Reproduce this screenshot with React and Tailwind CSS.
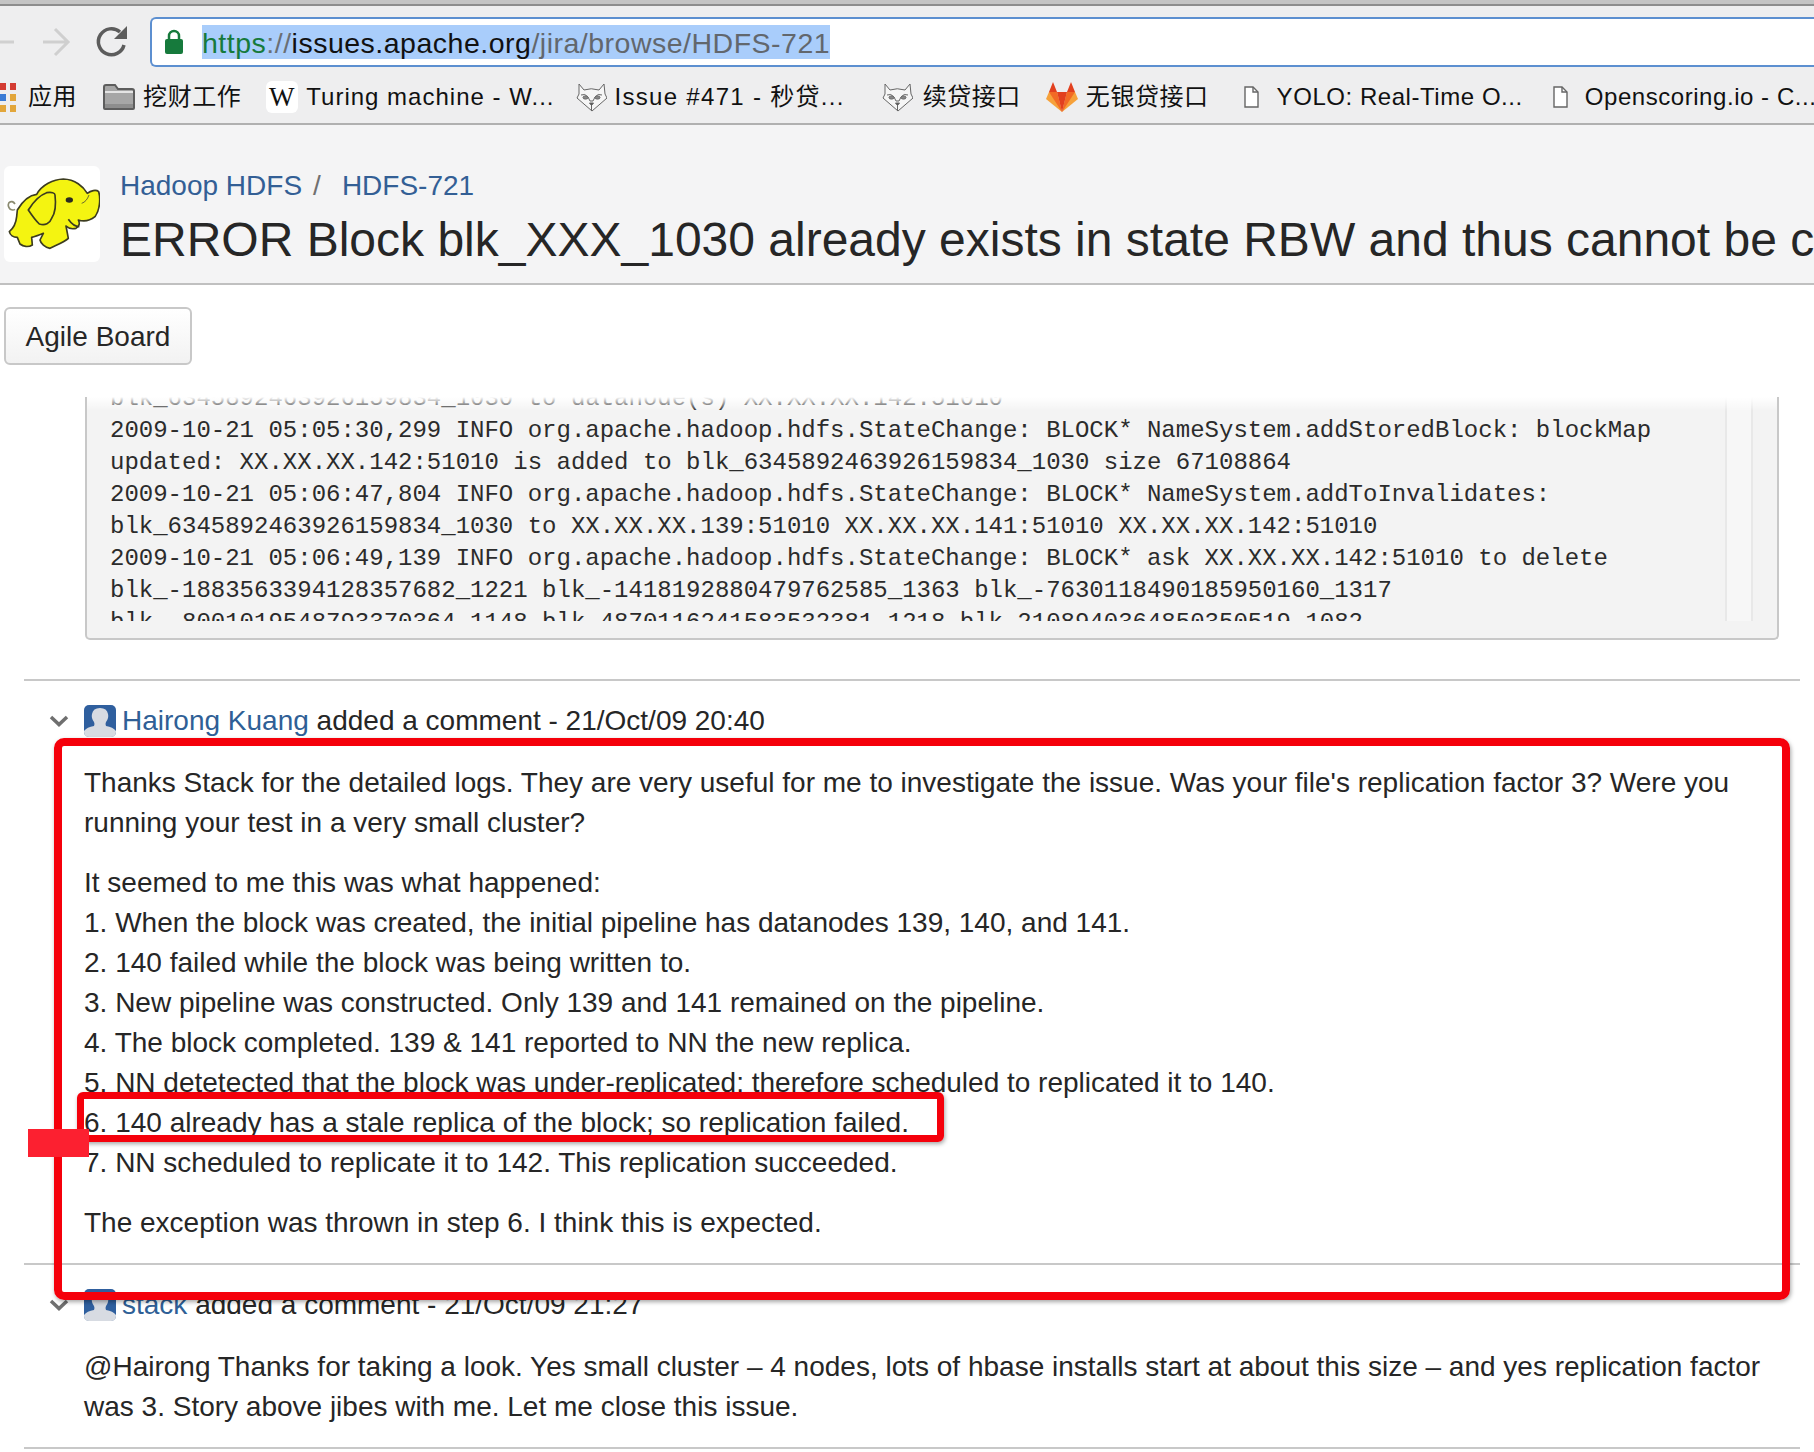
import React from 'react';

const LOG_LINES = [
  'blk_6345892463926159834_1030 to datanode(s) XX.XX.XX.142:51010',
  '2009-10-21 05:05:30,299 INFO org.apache.hadoop.hdfs.StateChange: BLOCK* NameSystem.addStoredBlock: blockMap',
  'updated: XX.XX.XX.142:51010 is added to blk_6345892463926159834_1030 size 67108864',
  '2009-10-21 05:06:47,804 INFO org.apache.hadoop.hdfs.StateChange: BLOCK* NameSystem.addToInvalidates:',
  'blk_6345892463926159834_1030 to XX.XX.XX.139:51010 XX.XX.XX.141:51010 XX.XX.XX.142:51010',
  '2009-10-21 05:06:49,139 INFO org.apache.hadoop.hdfs.StateChange: BLOCK* ask XX.XX.XX.142:51010 to delete',
  'blk_-1883563394128357682_1221 blk_-1418192880479762585_1363 blk_-7630118490185950160_1317',
  'blk_-8001019548793370364_1148 blk_4870116241583532381_1218 blk_2108940364850350519_1082',
];

const STEPS = [
  '1. When the block was created, the initial pipeline has datanodes 139, 140, and 141.',
  '2. 140 failed while the block was being written to.',
  '3. New pipeline was constructed. Only 139 and 141 remained on the pipeline.',
  '4. The block completed. 139 & 141 reported to NN the new replica.',
  '5. NN detetected that the block was under-replicated; therefore scheduled to replicated it to 140.',
  '6. 140 already has a stale replica of the block; so replication failed.',
  '7. NN scheduled to replicate it to 142. This replication succeeded.',
];

const AppsIcon = () => (
  <svg width="17" height="32" viewBox="0 0 17 32" className="shrink-0">
    <rect x="0" y="2" width="6" height="7" fill="#d33b32" />
    <rect x="10" y="2" width="6" height="7" fill="#d33b32" />
    <rect x="0" y="13" width="6" height="7" fill="#3a7bd5" />
    <rect x="10" y="13" width="6" height="7" fill="#e2a63b" />
    <rect x="0" y="24" width="6" height="7" fill="#e2a63b" />
    <rect x="10" y="24" width="6" height="7" fill="#e2a63b" />
  </svg>
);

const FolderIcon = () => (
  <svg width="32" height="26" viewBox="0 0 32 26" className="shrink-0">
    <path d="M1 24V3q0-2 2-2h9l3 4h14q2 0 2 2v17q0 1-1 1H2q-1 0-1-1z" fill="#a6a6a6" stroke="#5d5d5d" strokeWidth="2" />
    <path d="M2 8h28" stroke="#e4e4e4" strokeWidth="2" />
    <path d="M2 20h28v4H2z" fill="#8d8d8d" />
  </svg>
);

const WikiIcon = () => (
  <span className="flex h-[32px] w-[32px] shrink-0 items-center justify-center rounded-[6px] bg-white font-['Liberation_Serif',serif] text-[27px] leading-none text-[#111]">
    W
  </span>
);

const FoxIcon = () => (
  <svg width="31" height="30" viewBox="0 0 31 30" fill="none" stroke="#666" strokeWidth="1" className="shrink-0">
    <path d="M3 2l5 6q7-2.500 15 0l5-6 1 10 2 4-15 13L1 16l2-4z" fill="#f6f6f6" />
    <path d="M5 13q4-2 7 2l2 4h3l2-4q3-4 7-2" />
    <path d="M15.500 29v-7" />
    <ellipse cx="9.500" cy="15.500" rx="2.500" ry="1.600" fill="#888" />
    <ellipse cx="21.500" cy="15.500" rx="2.500" ry="1.600" fill="#888" />
    <path d="M13.500 21h4l-2 2.500z" fill="#555" />
  </svg>
);

const GitlabIcon = () => (
  <svg width="32" height="30" viewBox="0 0 32 30" className="shrink-0">
    <path d="M16 30L0 17l3-7h8z" fill="#f6a13a" />
    <path d="M16 30l16-13-3-7h-8z" fill="#f6a13a" />
    <path d="M16 30L3 10h8z" fill="#f26a25" />
    <path d="M16 30l13-20h-8z" fill="#f26a25" />
    <path d="M16 30l-5-20h10z" fill="#e2401f" />
    <path d="M3 10L7 0l4 10z" fill="#e2401f" />
    <path d="M29 10L25 0l-4 10z" fill="#e2401f" />
  </svg>
);

const DocIcon = () => (
  <svg width="15" height="22" viewBox="0 0 15 22" fill="#fff" stroke="#666" strokeWidth="1.400" className="shrink-0">
    <path d="M1 1h8l5 5v15H1z" />
    <path d="M9 1v5h5" fill="none" />
  </svg>
);

const Chevron = () => (
  <svg width="20" height="12" viewBox="0 0 20 12" fill="none" stroke="#6f6f6f" strokeWidth="3.500" className="shrink-0">
    <path d="M2 2l8 7.500L18 2" />
  </svg>
);

const Avatar = () => (
  <svg width="32" height="32" viewBox="0 0 32 32" className="shrink-0">
    <rect width="32" height="32" rx="5" fill="#2f5f9e" />
    <path d="M0 27q0 5 5 5h22q5 0 5-5v-1q-3-4-10-5-1-2 0-4 3-4 2-8-1-6-8-6T8 9q-1 4 2 8 1 2 0 4-7 1-10 5z" fill="#d7dbe2" />
  </svg>
);

function Bookmark({ icon, label, className }) {
  return (
    <div className={`flex shrink-0 items-center whitespace-nowrap ${className}`}>
      {icon}
      <span>{label}</span>
    </div>
  );
}

function CommentHead({ name, meta }) {
  return (
    <div className="flex h-[32px] items-center">
      <div className="flex w-[84px] justify-end pr-[15px]">
        <Chevron />
      </div>
      <Avatar />
      <span className="ml-[6px] whitespace-nowrap">
        <a className="text-[#2f5f96]">{name}</a> {meta}
      </span>
    </div>
  );
}

export default function App() {
  return (
    <div className="relative h-[1452px] w-[1814px] overflow-hidden bg-white font-['Liberation_Sans','Noto_Sans_CJK_SC',sans-serif] text-[28px] leading-[40px] text-[#262626]">
      {/* browser chrome */}
      <div className="h-[6px] border-b-2 border-[#8d8d8d] bg-[#c4c4c4]" />
      <div className="flex h-[61px] items-start bg-[#eeeeef]">
        <svg width="150" height="61" viewBox="0 0 150 61" fill="none" className="shrink-0">
          <path d="M-6 36h20M-1 26l-10 10 10 10" stroke="#d0d0d0" strokeWidth="3" />
          <path d="M43 36h24M55 23l13 13-13 13" stroke="#cfcfcf" strokeWidth="3" />
          <path d="M124 39a13 13 0 1 1-4-13" stroke="#5c5c5c" strokeWidth="3.500" />
          <path d="M127 20v13h-13z" fill="#5c5c5c" />
        </svg>
        <div className="mt-[11px] flex h-[50px] flex-1 items-center rounded-l-[6px] border-y-2 border-l-2 border-[#5c8fd0] bg-white pl-[12px]">
          <svg width="20" height="26" viewBox="0 0 20 26" className="shrink-0">
            <path d="M5 11V7a5 5 0 0 1 10 0v4" fill="none" stroke="#167a3c" strokeWidth="2.500" />
            <rect x="1" y="10" width="18" height="15" rx="2" fill="#167a3c" />
          </svg>
          <div className="ml-[18px] flex h-[34px] items-center bg-[#a9cdfb] pt-[2px] text-[28.5px] tracking-[0.5px]">
            <span className="text-[#167a3c]">https</span>
            <span className="text-[#6a6f74]">://</span>
            <span className="text-[#111]">issues.apache.org</span>
            <span className="text-[#62676d]">/jira/browse/HDFS-721</span>
          </div>
        </div>
      </div>
      <div className="flex h-[58px] items-center overflow-hidden border-b-2 border-[#b0b0b0] bg-[#eeeeef] pt-[4px] text-[24px] tracking-[0.55px] text-[#111]">
        <Bookmark className="gap-[11px]" icon={<AppsIcon />} label="应用" />
        <Bookmark className="ml-[26px] gap-[8px]" icon={<FolderIcon />} label="挖财工作" />
        <Bookmark className="ml-[25px] gap-[8px] tracking-[1px]" icon={<WikiIcon />} label="Turing machine - W..." />
        <Bookmark className="ml-[21px] gap-[8px] tracking-[1.3px]" icon={<FoxIcon />} label="Issue #471 - 秒贷..." />
        <Bookmark className="ml-[37px] gap-[10px]" icon={<FoxIcon />} label="续贷接口" />
        <Bookmark className="ml-[25px] gap-[8px]" icon={<GitlabIcon />} label="无银贷接口" />
        <Bookmark className="ml-[35px] gap-[18px]" icon={<DocIcon />} label="YOLO: Real-Time O..." />
        <Bookmark className="ml-[30px] gap-[17px]" icon={<DocIcon />} label="Openscoring.io - C..." />
      </div>

      {/* issue header */}
      <div className="flex h-[160px] border-b-2 border-[#c0c0c0] bg-[#f4f4f5] pl-[4px] pt-[41px]">
        <div className="h-[96px] w-[96px] shrink-0 rounded-[6px] bg-white">
          <svg width="96" height="96" viewBox="12 18 288 288" className="blur-[0.6px]">
            <path d="M45 132q-8-12-18-4-6 10 4 20 8 4 14 0" fill="none" stroke="#8a8a70" strokeWidth="5" />
            <path d="M52 150C70 120 90 105 110 103C125 75 160 58 190 57C225 58 250 80 262 100C272 92 288 88 296 95C302 115 300 150 285 170C270 182 250 185 235 180C240 190 238 200 228 205C215 208 205 205 198 198L205 235C195 245 170 255 150 265C135 262 122 250 120 240L130 220C118 225 105 230 95 232L97 255C85 262 70 260 60 252L52 232C40 232 30 225 28 215C40 205 48 190 50 170Z" fill="#f4f411" stroke="#3c3c20" strokeWidth="5" strokeLinejoin="round" />
            <path d="M85 150C100 125 120 105 140 98C155 96 165 98 165 105C168 130 165 160 155 175C150 190 135 198 118 192C105 180 95 165 85 150Z" fill="#f4f411" stroke="#3c3c20" strokeWidth="5" />
            <ellipse cx="208" cy="120" rx="11" ry="8" fill="#2b2b20" />
            <path d="M205 178q15 22 33 22" fill="none" stroke="#3c3c20" strokeWidth="5" />
            <path d="M245 130q15-5 22-25" fill="none" stroke="#6a6a30" strokeWidth="3" />
          </svg>
        </div>
        <div className="ml-[20px] min-w-0 flex-1 overflow-hidden whitespace-nowrap">
          <div className="flex h-[40px] items-center">
            <a className="text-[#335f95]">Hadoop HDFS</a>
            <span className="ml-[11px] mr-[21px] text-[#707070]">/</span>
            <a className="text-[#335f95]">HDFS-721</a>
          </div>
          <h1 className="mt-[4px] text-[48px] leading-[60px] text-[#262626]">
            ERROR Block blk_XXX_1030 already exists in state RBW and thus cannot be created
          </h1>
        </div>
      </div>

      {/* toolbar */}
      <div className="pl-[4px] pt-[22px]">
        <button className="flex h-[58px] w-[188px] items-center justify-center rounded-[6px] border-2 border-[#c8c8c8] bg-gradient-to-b from-white to-[#f2f2f2] pt-[2px] text-[#262626]">
          Agile Board
        </button>
      </div>

      {/* log panel, the top of it is scrolled away */}
      <div className="ml-[85px] mr-[35px] mt-[32px] h-[243px] rounded-b-[5px] border-x-2 border-b-2 border-[#c8c8c8] bg-[#f3f3f3]">
        <div className="relative flex h-[224px] overflow-hidden">
          <div className="min-w-0 flex-1 -translate-y-[14px] pl-[23px] font-['Liberation_Mono',monospace] text-[24px] leading-[32px] text-[#2b2b2b]">
            {LOG_LINES.map((line, i) => (
              <div key={i} className="whitespace-pre">
                {line}
              </div>
            ))}
          </div>
          <div className="mr-[24px] w-[28px] shrink-0 border-x-2 border-[#e8e8e8] bg-[#f7f7f7]" />
          <div className="absolute inset-x-0 top-0 h-[14px] bg-gradient-to-b from-white to-transparent" />
        </div>
      </div>

      {/* comments */}
      <div className="ml-[24px] mr-[14px]">
        <div className="mt-[39px] border-t-2 border-[#c8c8c8]" />
      </div>
      <div className="mt-[24px]">
        <CommentHead name="Hairong Kuang" meta="added a comment - 21/Oct/09 20:40" />
      </div>
      <div className="ml-[84px] mr-[60px] mt-[26px]">
        <p>
          Thanks Stack for the detailed logs. They are very useful for me to investigate the issue. Was your file's
          replication factor 3? Were you running your test in a very small cluster?
        </p>
        <p className="mt-[20px]">It seemed to me this was what happened:</p>
        {STEPS.map((step) => (
          <p key={step}>{step}</p>
        ))}
        <p className="mt-[20px]">The exception was thrown in step 6. I think this is expected.</p>
      </div>
      <div className="ml-[24px] mr-[14px] mt-[20px] border-t-2 border-[#c8c8c8]" />
      <div className="mt-[24px]">
        <CommentHead name="stack" meta="added a comment - 21/Oct/09 21:27" />
      </div>
      <div className="ml-[84px] mr-[40px] mt-[26px]">
        <p>
          @Hairong Thanks for taking a look. Yes small cluster – 4 nodes, lots of hbase installs start at about this
          size – and yes replication factor was 3. Story above jibes with me. Let me close this issue.
        </p>
      </div>
      <div className="ml-[24px] mr-[14px] mt-[20px] border-t-2 border-[#c8c8c8]" />

      {/* red annotations drawn over the screenshot */}
      <div className="absolute left-[54px] top-[738px] h-[562px] w-[1736px] rounded-[10px] border-[8px] border-[#f5000b] shadow-[1px_2px_4px_rgba(0,0,0,0.35)]" />
      <div className="absolute left-[77px] top-[1092px] h-[50px] w-[867px] rounded-[6px] border-[7px] border-[#f5000b] shadow-[1px_2px_4px_rgba(0,0,0,0.35)]" />
      <div className="absolute left-[28px] top-[1129px] h-[28px] w-[61px] bg-[#fc2030]" />
    </div>
  );
}
